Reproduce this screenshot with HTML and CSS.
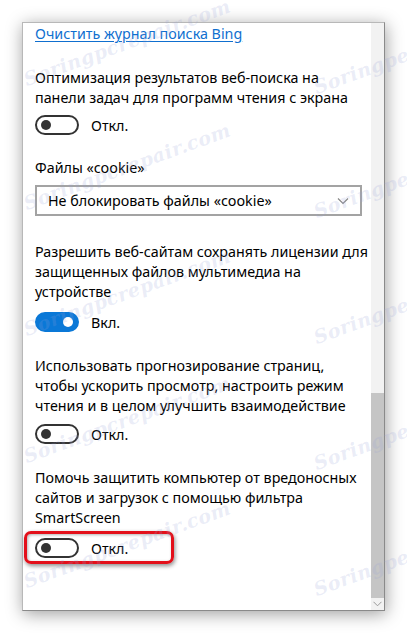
FILE: index.html
```html
<!DOCTYPE html>
<html lang="ru">
<head>
<meta charset="utf-8">
<link rel="stylesheet" href="styles.css">
</head>
<body>
<div class="window">
  <div class="content">
    <a class="link" href="#">Очистить журнал поиска Bing</a>

    <p class="label first">Оптимизация результатов веб-поиска на<br>панели задач для программ чтения с экрана</p>
    <div class="toggle-row first-row"><span class="toggle"></span><span class="state">Откл.</span></div>

    <p class="label cookie">Файлы «cookie»</p>
    <div class="select">
      <span>Не блокировать файлы «cookie»</span>
      <svg class="chev" width="12" height="8" viewBox="0 0 12 8"><path d="M1 1.5 L6 6.5 L11 1.5" fill="none" stroke="#888" stroke-width="1.2"/></svg>
    </div>

    <p class="label after-select">Разрешить веб-сайтам сохранять лицензии для<br>защищенных файлов мультимедиа на<br>устройстве</p>
    <div class="toggle-row"><span class="toggle on"></span><span class="state">Вкл.</span></div>

    <p class="label sect">Использовать прогнозирование страниц,<br>чтобы ускорить просмотр, настроить режим<br>чтения и в целом улучшить взаимодействие</p>
    <div class="toggle-row tight"><span class="toggle"></span><span class="state">Откл.</span></div>

    <p class="label sect">Помочь защитить компьютер от вредоносных<br>сайтов и загрузок с помощью фильтра<br>SmartScreen</p>
    <div class="toggle-row"><span class="toggle"></span><span class="state">Откл.</span>
      <span class="highlight"></span>
    </div>
  </div>
  <div class="scrollbar">
    <div class="track"></div>
    <div class="thumb"></div>
    <div class="arrow"><svg width="9" height="6" viewBox="0 0 9 6"><path d="M0.5 0.8 L4.5 4.8 L8.5 0.8" fill="none" stroke="#9a9a9a" stroke-width="1"/></svg></div>
  </div>
</div>
<div class="wm w1">Soringpcrepair.com</div>
<div class="wm w2">Soringpcrepair.com</div>
<div class="wm w3">Soringpcrepair.com</div>
<div class="wm w4">Soringpcrepair.com</div>
<div class="wm w5">Soringpcrepair.com</div>
<div class="wm r1">Soringper</div>
<div class="wm r2">Soringper</div>
<div class="wm r3">Soringper</div>
<div class="wm r4">Soringper</div>
<div class="wm r5">Soringper</div>
</body>
</html>
```

FILE: styles.css
```css
html, body {
  margin: 0;
  padding: 0;
  background: #ffffff;
}
body {
  width: 407px;
  height: 633px;
  overflow: hidden;
  position: relative;
  font-family: "Noto Sans", "Open Sans", sans-serif;
  font-size: 14.3px;
  color: #000;
}
.window {
  margin: 22px 0 0 22px;
  width: 361px;
  height: 587px;
  border: 1px solid #b8b8b8;
  border-right-color: #8a8a8a;
  border-bottom-color: #8a8a8a;
  background: #fff;
  display: flex;
  box-shadow: 1px 3px 16px rgba(0, 0, 0, 0.38);
}
.content {
  flex: 1;
  padding: 1px 0 0 12px;
  position: relative;
}
.link {
  display: inline-block;
  color: #0f6fcf;
  text-decoration: underline;
  text-underline-offset: 2px;
  line-height: 20px;
}
.label {
  margin: 0;
  line-height: 20px;
  white-space: nowrap;
}
.label.first { margin-top: 24px; }
.label.cookie { margin-top: 22px; }
.label.after-select { margin-top: 26px; }
.label.sect { margin-top: 23px; }
.toggle-row {
  display: flex;
  align-items: center;
  height: 22px;
  margin-top: 9px;
  position: relative;
}
.toggle-row.first-row { margin-top: 6px; }
.toggle-row.tight { margin-top: 7px; }
.toggle {
  box-sizing: border-box;
  width: 44px;
  height: 20px;
  border: 2px solid #333;
  border-radius: 10px;
  position: relative;
  flex: none;
}
.toggle::after {
  content: "";
  position: absolute;
  left: 4px;
  top: 3px;
  width: 10px;
  height: 10px;
  border-radius: 50%;
  background: #333;
}
.toggle.on {
  background: #0a78d7;
  border-color: #0a78d7;
}
.toggle.on::after {
  left: auto;
  right: 4px;
  background: #fff;
}
.state {
  margin-left: 12px;
}
.select {
  box-sizing: border-box;
  margin-top: 7px;
  width: 327px;
  height: 31px;
  border: 2px solid #a3a3a3;
  display: flex;
  align-items: center;
  justify-content: space-between;
  padding: 0 11px 0 11px;
}
.chev { margin-top: 1px; }
.highlight {
  position: absolute;
  left: -11px;
  top: -6px;
  width: 150px;
  height: 33px;
  box-sizing: border-box;
  border: 3px solid #e3101a;
  border-radius: 7px;
  box-shadow: 1px 2px 4px rgba(0,0,0,0.45), inset 1px 1px 3px rgba(0,0,0,0.3);
}
.scrollbar {
  width: 13px;
  display: flex;
  flex-direction: column;
  background: #f2f2f2;
}
.track { height: 370px; }
.thumb {
  height: 205px;
  background: #c5c5c5;
}
.arrow {
  flex: 1;
  display: flex;
  align-items: center;
  justify-content: center;
  background: #f2f2f2;
}
.wm {
  position: absolute;
  font-family: "DejaVu Serif", serif;
  font-style: italic;
  font-weight: bold;
  font-size: 19px;
  color: rgba(150, 160, 215, 0.2);
  transform: rotate(-20deg);
  transform-origin: left bottom;
  white-space: nowrap;
  pointer-events: none;
  letter-spacing: 0.5px;
}
.w1 { left: 28px; top: 68px; }
.w2 { left: 28px; top: 192px; }
.w3 { left: 28px; top: 318px; }
.w4 { left: 28px; top: 445px; }
.w5 { left: 28px; top: 570px; }
.r1 { left: 318px; top: 76px; }
.r2 { left: 318px; top: 200px; }
.r3 { left: 318px; top: 326px; }
.r4 { left: 318px; top: 452px; }
.r5 { left: 318px; top: 578px; }
```
